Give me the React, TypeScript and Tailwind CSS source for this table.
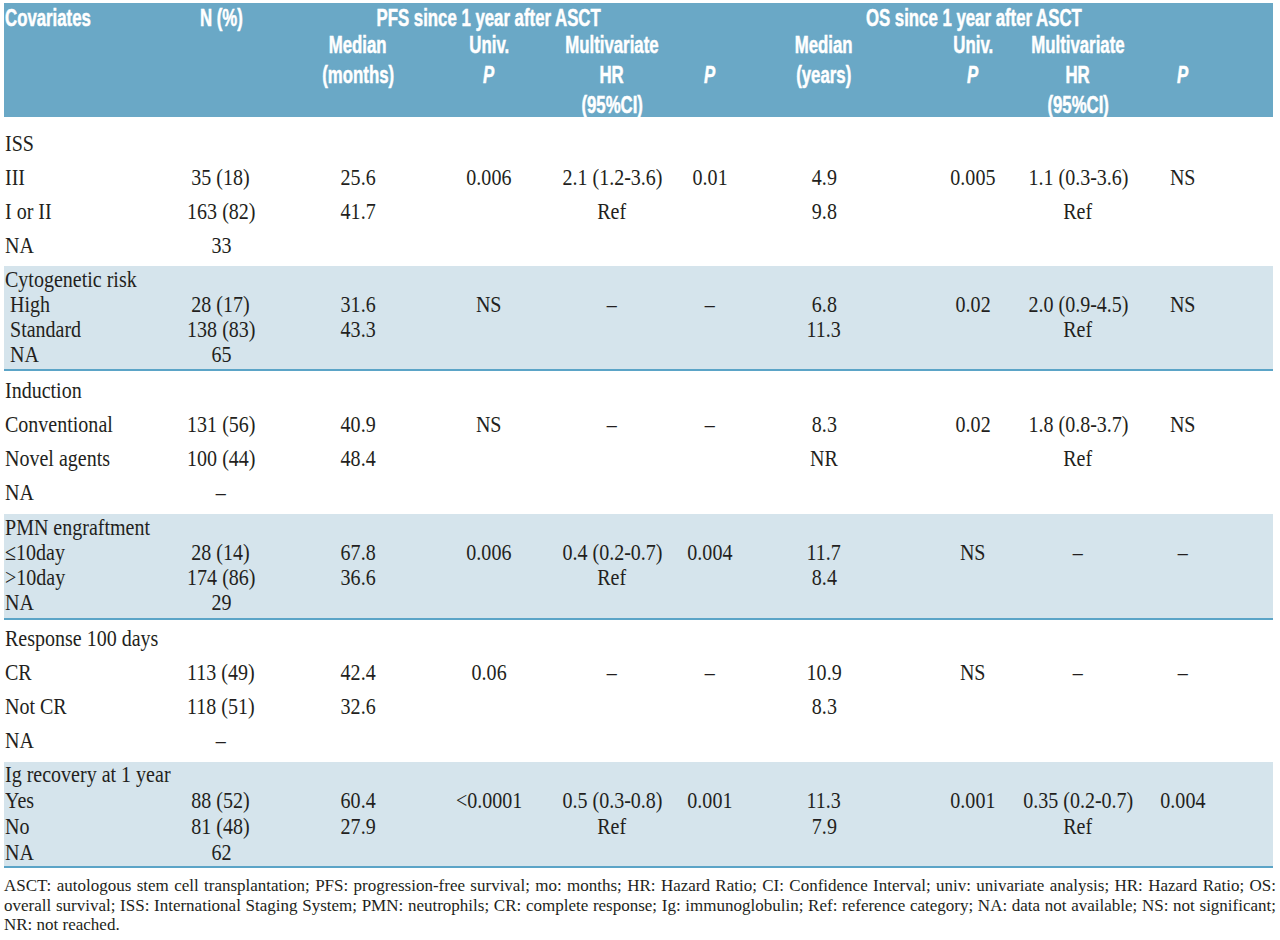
const COLS =
  'grid grid-cols-[156px_122px_152px_110px_136px_60px_168px_130px_80px_130px_25px]';

type Row = { cells: string[]; indent?: boolean };
type Section = { shaded: boolean; rowH: string; pad: string; rows: Row[] };

const sections: Section[] = [
  {
    shaded: false,
    rowH: 'h-[34px]',
    pad: 'pt-[10px] pb-[3px]',
    rows: [
      { cells: ['ISS'] },
      { cells: ['III', '35 (18)', '25.6', '0.006', '2.1 (1.2-3.6)', '0.01', '4.9', '0.005', '1.1 (0.3-3.6)', 'NS'] },
      { cells: ['I or II', '163 (82)', '41.7', '', 'Ref', '', '9.8', '', 'Ref', ''] },
      { cells: ['NA', '33'] },
    ],
  },
  {
    shaded: true,
    rowH: 'h-[25px]',
    pad: 'pt-[1px] pb-[2px]',
    rows: [
      { cells: ['Cytogenetic risk'] },
      { cells: ['High', '28 (17)', '31.6', 'NS', '–', '–', '6.8', '0.02', '2.0 (0.9-4.5)', 'NS'], indent: true },
      { cells: ['Standard', '138 (83)', '43.3', '', '', '', '11.3', '', 'Ref', ''], indent: true },
      { cells: ['NA', '65'], indent: true },
    ],
  },
  {
    shaded: false,
    rowH: 'h-[34px]',
    pad: 'pt-[3px] pb-[4px]',
    rows: [
      { cells: ['Induction'] },
      { cells: ['Conventional', '131 (56)', '40.9', 'NS', '–', '–', '8.3', '0.02', '1.8 (0.8-3.7)', 'NS'] },
      { cells: ['Novel agents', '100 (44)', '48.4', '', '', '', 'NR', '', 'Ref', ''] },
      { cells: ['NA', '–'] },
    ],
  },
  {
    shaded: true,
    rowH: 'h-[25px]',
    pad: 'pt-[1px] pb-[3px]',
    rows: [
      { cells: ['PMN engraftment'] },
      { cells: ['≤10day', '28 (14)', '67.8', '0.006', '0.4 (0.2-0.7)', '0.004', '11.7', 'NS', '–', '–'] },
      { cells: ['>10day', '174 (86)', '36.6', '', 'Ref', '', '8.4'] },
      { cells: ['NA', '29'] },
    ],
  },
  {
    shaded: false,
    rowH: 'h-[34px]',
    pad: 'pt-[2px] pb-[4px]',
    rows: [
      { cells: ['Response 100 days'] },
      { cells: ['CR', '113 (49)', '42.4', '0.06', '–', '–', '10.9', 'NS', '–', '–'] },
      { cells: ['Not CR', '118 (51)', '32.6', '', '', '', '8.3'] },
      { cells: ['NA', '–'] },
    ],
  },
  {
    shaded: true,
    rowH: 'h-[26px]',
    pad: 'pt-0 pb-0',
    rows: [
      { cells: ['Ig recovery at 1 year'] },
      { cells: ['Yes', '88 (52)', '60.4', '<0.0001', '0.5 (0.3-0.8)', '0.001', '11.3', '0.001', '0.35 (0.2-0.7)', '0.004'] },
      { cells: ['No', '81 (48)', '27.9', '', 'Ref', '', '7.9', '', 'Ref', ''] },
      { cells: ['NA', '62'] },
    ],
  },
];

// header sub-columns: one entry per data column, lines top to bottom
const subHeads: { lines: string[]; italic?: number }[] = [
  { lines: ['Median', '(months)'] },
  { lines: ['Univ.', 'P'], italic: 1 },
  { lines: ['Multivariate', 'HR', '(95%CI)'] },
  { lines: ['', 'P'], italic: 1 },
  { lines: ['Median', '(years)'] },
  { lines: ['Univ.', 'P'], italic: 1 },
  { lines: ['Multivariate', 'HR', '(95%CI)'] },
  { lines: ['', 'P'], italic: 1 },
];

function Narrow({ children, left }: { children: React.ReactNode; left?: boolean }) {
  return (
    <span className={`inline-block whitespace-nowrap scale-x-[0.73] ${left ? 'origin-left' : ''}`}>
      {children}
    </span>
  );
}

function Header() {
  return (
    <div className="bg-[#6aa8c6] text-white h-[114px] font-['Liberation_Sans',Arial,sans-serif] font-bold text-[23px] [-webkit-text-stroke:0.5px_white]">
      <div className={`${COLS} h-[27px] pt-[3px] leading-[24px]`}>
        <div className="pl-[1px]">
          <Narrow left>Covariates</Narrow>
        </div>
        <div className="flex justify-center">
          <Narrow>N (%)</Narrow>
        </div>
        <div className="col-span-4 flex justify-center pr-[44px]">
          <Narrow>PFS since 1 year after ASCT</Narrow>
        </div>
        <div className="col-span-4 flex justify-center pr-[40px]">
          <Narrow>OS since 1 year after ASCT</Narrow>
        </div>
      </div>
      <div className={`${COLS} leading-[30px]`}>
        <div />
        <div />
        {subHeads.map((h, i) => (
          <div key={i} className="flex flex-col items-center">
            {h.lines.map((l, j) => (
              <div key={j} className={`h-[30px] ${h.italic === j ? 'italic' : ''}`}>
                <Narrow>{l}</Narrow>
              </div>
            ))}
          </div>
        ))}
      </div>
    </div>
  );
}

function SectionBlock({ s }: { s: Section }) {
  return (
    <div
      className={`${s.pad} ${
        s.shaded ? 'bg-[#d5e4ec] border-b-2 border-[#5ba4c7]' : 'bg-white'
      }`}
    >
      {s.rows.map((r, ri) => (
        <div key={ri} className={`${COLS} ${s.rowH}`}>
          {Array.from({ length: 10 }).map((_, ci) => {
            const v = r.cells[ci] ?? '';
            if (ci === 0) {
              return (
                <div
                  key={ci}
                  className={`flex items-center whitespace-nowrap ${r.indent ? 'pl-[6px]' : 'pl-[1px]'}`}
                >
                  <span className="inline-block origin-left scale-x-[0.87]">{v}</span>
                </div>
              );
            }
            return (
              <div key={ci} className="flex items-center justify-center whitespace-nowrap">
                <span className="inline-block scale-x-[0.87]">{v}</span>
              </div>
            );
          })}
          <div />
        </div>
      ))}
    </div>
  );
}

export default function App() {
  return (
    <div className="w-[1280px] h-[940px] bg-white overflow-hidden pt-[3px] pl-[4px] pr-[7px]">
      <div className="w-[1269px]">
        <Header />
        <div className="font-['Liberation_Serif','Times_New_Roman',serif] text-[23px] leading-[26px] text-[#231f20]">
          {sections.map((s, i) => (
            <SectionBlock key={i} s={s} />
          ))}
        </div>
        <div className="pt-[8px] font-['Liberation_Serif','Times_New_Roman',serif] text-[17px] leading-[19.5px] text-[#231f20] w-[1272px]">
          <p className="text-justify [text-align-last:justify] whitespace-nowrap">
            ASCT: autologous stem cell transplantation; PFS: progression-free survival; mo: months; HR: Hazard Ratio; CI:
            Confidence Interval; univ: univariate analysis; HR: Hazard Ratio; OS:
          </p>
          <p className="text-justify [text-align-last:justify] whitespace-nowrap">
            overall survival; ISS: International Staging System; PMN: neutrophils; CR: complete response; Ig: immunoglobulin;
            Ref: reference category; NA: data not available; NS: not significant;
          </p>
          <p>NR: not reached.</p>
        </div>
      </div>
    </div>
  );
}
